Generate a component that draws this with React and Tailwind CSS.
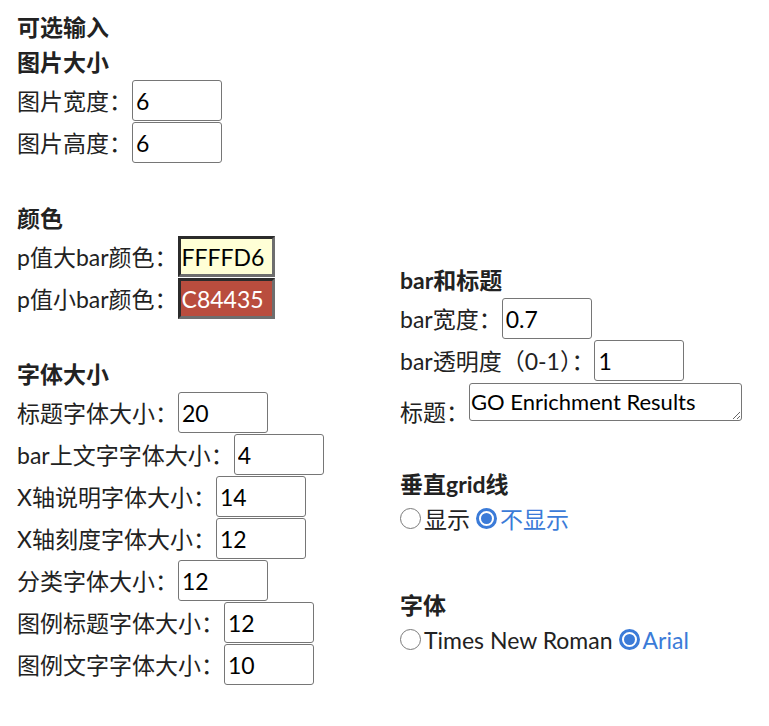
import React from 'react';

const fontStack = "font-['Lato','Noto_Sans_CJK_SC',sans-serif]";

const Heading = ({ children, className = '' }) => (
  <div className={`h-[35px] flex items-center font-bold ${className}`}>{children}</div>
);

const Field = ({ label, value }) => (
  <div className="flex h-[42px]">
    <span className="leading-[42px] whitespace-nowrap">{label}</span>
    <input
      readOnly
      value={value}
      className="w-[90px] h-[41px] border border-[#767676] rounded-[3px] px-[3px] text-black bg-white outline-none"
    />
  </div>
);

const ColorField = ({ label, value, bg, fg }) => (
  <div className="flex h-[42px]">
    <span className="leading-[42px] whitespace-nowrap">{label}</span>
    <input
      readOnly
      value={value}
      className={`w-[97px] h-[41px] border-[3px] border-t-[#2b2b2b] border-l-[#2b2b2b] border-b-[#6e6e6e] border-r-[#6e6e6e] px-[1px] outline-none ${bg} ${fg}`}
    />
  </div>
);

const Radio = ({ checked }) =>
  checked ? (
    <span className="w-[21px] h-[21px] rounded-full border-[3px] border-[#3b7bd8] flex items-center justify-center shrink-0 -mt-[3px]">
      <span className="w-[11px] h-[11px] rounded-full bg-[#3b7bd8]" />
    </span>
  ) : (
    <span className="w-[21px] h-[21px] rounded-full border-[1.5px] border-[#7a7a7a] shrink-0 -mt-[3px]" />
  );

const RadioRow = ({ options }) => (
  <div className="h-[35px] flex items-center">
    {options.map((opt, idx) => (
      <label key={idx} className={`flex items-center ${idx > 0 ? 'ml-[6px]' : ''}`}>
        <Radio checked={opt.checked} />
        <span className={`ml-[3px] whitespace-nowrap ${opt.checked ? 'text-[#3b7bd8]' : ''}`}>{opt.text}</span>
      </label>
    ))}
  </div>
);

export default function App() {
  const fontSizes = [
    ['标题字体大小：', '20'],
    ['bar上文字字体大小：', '4'],
    ['X轴说明字体大小：', '14'],
    ['X轴刻度字体大小：', '12'],
    ['分类字体大小：', '12'],
    ['图例标题字体大小：', '12'],
    ['图例文字字体大小：', '10'],
  ];

  return (
    <div className={`w-[769px] h-[726px] bg-white text-[#222] text-[23px] flex pl-[17px] overflow-hidden ${fontStack}`}>
      {/* left column */}
      <div className="w-[383px] shrink-0 flex flex-col">
        <Heading className="mt-[10px]">可选输入</Heading>
        <Heading>图片大小</Heading>
        <Field label="图片宽度：" value="6" />
        <Field label="图片高度：" value="6" />

        <Heading className="mt-[37px]">颜色</Heading>
        <ColorField label="p值大bar颜色：" value="FFFFD6" bg="bg-[#ffffd6]" fg="text-black" />
        <ColorField label="p值小bar颜色：" value="C84435" bg="bg-[#b94d3e]" fg="text-white" />

        <Heading className="mt-[37px]">字体大小</Heading>
        {fontSizes.map(([label, value], idx) => (
          <Field key={idx} label={label} value={value} />
        ))}
      </div>

      {/* right column */}
      <div className="flex flex-col mt-[263px]">
        <Heading>bar和标题</Heading>
        <Field label="bar宽度：" value="0.7" />
        <Field label="bar透明度（0-1）：" value="1" />
        <div className="flex h-[45px]">
          <span className="pt-[15px] leading-[30px] whitespace-nowrap">标题：</span>
          <textarea
            readOnly
            value="GO Enrichment Results"
            className="mt-[1px] w-[273px] h-[38px] border border-[#767676] rounded-[3px] pl-[1px] pt-[3px] text-[22px] leading-[30px] text-black resize overflow-hidden outline-none"
          />
        </div>

        <Heading className="mt-[40px]">垂直grid线</Heading>
        <RadioRow options={[{ text: '显示' }, { text: '不显示', checked: true }]} />

        <Heading className="mt-[51px]">字体</Heading>
        <RadioRow options={[{ text: 'Times New Roman' }, { text: 'Arial', checked: true }]} />
      </div>
    </div>
  );
}
